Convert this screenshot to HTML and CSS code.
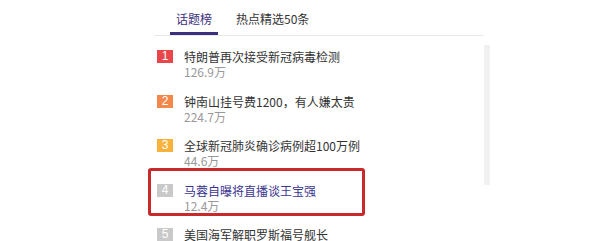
FILE: index.html
```html
<!DOCTYPE html>
<html lang="zh-CN">
<head>
<meta charset="utf-8">
<link rel="stylesheet" href="styles.css">
</head>
<body>
<div class="page">
  <div class="panel">
    <div class="tabs">
      <div class="tab active">话题榜</div>
      <div class="tab">热点精选50条</div>
    </div>
    <ul class="list">
      <li class="item">
        <span class="badge b1">1</span>
        <div class="text"><div class="title">特朗普再次接受新冠病毒检测</div><div class="count">126.9万</div></div>
      </li>
      <li class="item">
        <span class="badge b2">2</span>
        <div class="text"><div class="title">钟南山挂号费1200，有人嫌太贵</div><div class="count">224.7万</div></div>
      </li>
      <li class="item">
        <span class="badge b3">3</span>
        <div class="text"><div class="title">全球新冠肺炎确诊病例超100万例</div><div class="count">44.6万</div></div>
      </li>
      <li class="item marked">
        <span class="badge">4</span>
        <div class="text"><div class="title visited">马蓉自曝将直播谈王宝强</div><div class="count">12.4万</div></div>
        <div class="highlight"></div>
      </li>
      <li class="item">
        <span class="badge">5</span>
        <div class="text"><div class="title">美国海军解职罗斯福号舰长</div></div>
      </li>
    </ul>
  </div>
  <div class="scrollbar"></div>
</div>
</body>
</html>
```
FILE: styles.css
```css
html, body {
  margin: 0;
  padding: 0;
  background: #fff;
  height: 241px;
  overflow: hidden;
}
body {
  font-family: "Noto Sans CJK SC", "Liberation Sans", sans-serif;
}
.page {
  display: flex;
  margin-left: 154px;
}
.panel {
  width: 330px;
}
.tabs {
  display: flex;
  padding-left: 16px;
  border-bottom: 1px solid #e8e8e8;
}
.tab {
  padding: 9px 6px 3px;
  font-size: 12px;
  line-height: 20px;
  color: #333;
  border-bottom: 3px solid transparent;
}
.tab + .tab {
  margin-left: 12px;
}
.tab.active {
  color: #3b2f7e;
  border-bottom-color: #3b2f7e;
}
.list {
  list-style: none;
  margin: 0;
  padding: 14px 0 0 3px;
}
.item {
  position: relative;
  display: flex;
  align-items: flex-start;
  height: 44.5px;
}
.badge {
  width: 16px;
  height: 13px;
  margin-right: 11px;
  background: #c9c9c9;
  color: #fff;
  font-family: "Liberation Sans", sans-serif;
  font-size: 12px;
  line-height: 13px;
  text-align: center;
  flex: none;
}
.b1 { background: #e8464a; }
.b2 { background: #f4884a; }
.b3 { background: #f8b13a; }
.title {
  font-size: 12px;
  line-height: 14px;
  color: #333;
  white-space: nowrap;
}
.title.visited {
  color: #3a3590;
}
.count {
  margin-top: 1px;
  font-size: 12px;
  line-height: 14px;
  color: #999;
}
.highlight {
  position: absolute;
  left: -9px;
  top: -16px;
  width: 217px;
  height: 48px;
  box-sizing: border-box;
  border: 3px solid #c8292b;
  border-radius: 3px;
}
.scrollbar {
  width: 6px;
  height: 140px;
  margin-top: 45px;
  background: #f1f1f1;
}
```
